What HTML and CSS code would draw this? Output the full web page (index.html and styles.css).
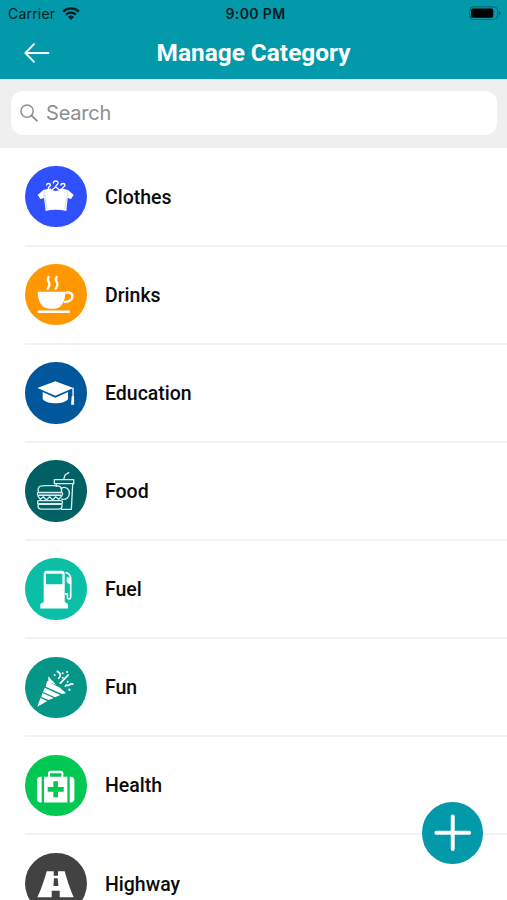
FILE: index.html
```
<!DOCTYPE html>
<html lang="en">
<head>
    <meta charset="utf-8">
    <title>Manage Category</title>
    <meta name="viewport" content="width=device-width, initial-scale=1">
    <link rel="stylesheet" href="styles.css">
</head>
<body>
    <header>
        <div class="statusBar">
            <div class="carrier">
                <span>Carrier</span>
                <svg class="wifi" viewBox="0 0 18 13">
                    <path d="M1.2 4.6a11.2 11.2 0 0 1 15.6 0M4 7.6a7.2 7.2 0 0 1 10 0" fill="none" stroke="#031c20" stroke-width="2.3"/>
                    <path d="M6 9.9a4.4 4.4 0 0 1 6 0L9 12.9z" fill="#031c20"/>
                </svg>
            </div>
            <div class="time">9:00 PM</div>
            <svg class="battery" viewBox="0 0 32 15">
                <rect x=".6" y=".9" width="28" height="12.6" rx="3.6" fill="none" stroke="#04606b"/>
                <rect x="2" y="2.5" width="22.3" height="9.3" rx="1.8" fill="#000"/>
                <path d="M30 5a2.5 2.5 0 0 1 0 4.6z" fill="#04606b"/>
            </svg>
        </div>
        <div class="navBar">
            <svg class="back" viewBox="0 0 26 20">
                <path d="M10 1.2L1.4 10l8.6 8.8M1.4 10h23.2" fill="none" stroke="#fff" stroke-width="1.8" stroke-linecap="round" stroke-linejoin="round"/>
            </svg>
            <h1>Manage Category</h1>
        </div>
    </header>

    <div class="searchArea">
        <div class="searchBox">
            <svg class="searchIcon" viewBox="0 0 18 18">
                <circle cx="7.1" cy="7.1" r="6.1" fill="none" stroke="#8e8e93" stroke-width="1.5"/>
                <path d="M11.6 11.6l5.2 5" stroke="#8e8e93" stroke-width="2" stroke-linecap="round"/>
            </svg>
            <span>Search</span>
        </div>
    </div>

    <main>
        <div class="row">
            <svg class="icon clothes" viewBox="28 29 184 184">
                <g fill="none" stroke="#fff" stroke-width="4" stroke-linecap="round">
                    <path d="M93 86c0-6 11-6 11 0 0 5-6 4-6 10M113 80c0-8 15-8 14 0-1 6-7 5-7 12l-12 9M120 92l12 9M136 86c0-6 12-6 12 0 0 5-7 5-7 10"/>
                </g>
                <path d="M66 116l17-15 21-5c7 11 25 11 32 0l21 5 17 15-8 12-10-3-4 39c-22-5-42-5-62 0l-5-39-11 3z" fill="#fff"/>
                <path d="M87 116l7 46M154 116l-7 46M86 105l-2 18M155 105l2 18" fill="none" stroke="#304ffe" stroke-opacity=".4" stroke-width="1.5"/>
            </svg>
            <span>Clothes</span>
        </div>
        <div class="row">
            <svg class="icon drinks" viewBox="28 29 184 184">
                <path d="M66 112h83c-1 24-8 51-33 51h-15c-25 0-35-27-35-51z" fill="#fff"/>
                <path d="M149 116c9-4 21 0 21 10 0 12-13 17-25 17" fill="none" stroke="#fff" stroke-width="7"/>
                <path d="M99 68c-9 12 5 14 2 25l-5 10M123 68c-9 12 5 14 2 25l-5 10" fill="none" stroke="#fff" stroke-width="7" stroke-linecap="round"/>
                <path d="M66 172h96" stroke="#fff" stroke-width="7"/>
            </svg>
            <span>Drinks</span>
        </div>
        <div class="row">
            <svg class="icon education" viewBox="28 29 184 184">
                <path d="M65 107l54-20 54 20-54 23z" fill="#fff"/>
                <path d="M81 119l38 17 38-17v21c-9 17-67 17-76 0z" fill="#fff"/>
                <path d="M172 106v28" stroke="#fff" stroke-width="4"/>
                <path d="M168 132h7v25h-9z" fill="#fff"/>
            </svg>
            <span>Education</span>
        </div>
        <div class="row">
            <svg class="icon food" viewBox="28 29 184 184">
                <g fill="none" stroke="#d8f0f0" stroke-width="4" stroke-linejoin="round" stroke-linecap="round">
                    <path d="M116 88h58v12h-58zM121 100l1 8M171 100l-4 77h-29M144 87l4-13 11-7"/>
                    <path d="M136 115c11-9 25-1 25 13 0 15-12 22-23 18"/>
                    <path d="M68 126c-5-25 15-20 35-20s39-4 34 20zM69 126h68c5 0 5 9 0 9H69c-5 0-5-9 0-9z"/>
                    <path d="M67 137l7 10 9-8 9 10 10-10 9 10 9-10 9 8 9-10M70 151h66c6 0 6 9 0 9H70c-6 0-6-9 0-9zM67 162h72v5c0 6-3 9-9 9H76c-6 0-9-3-9-9z"/>
                </g>
                <path d="M70 129h66v5H70z" fill="#a6cfcf" fill-opacity=".55"/>
            </svg>
            <span>Food</span>
        </div>
        <div class="row">
            <svg class="icon fuel" viewBox="28 29 184 184">
                <path d="M93 67h45c6 0 9 4 9 10v84l10 6v13H74v-13l10-6V77c0-6 3-10 9-10zm-2 9v32h49V76z" fill="#fff" fill-rule="evenodd"/>
                <path d="M149 73c9 0 16 8 16 18v54c0 9-10 8-10 0v-8h-7" fill="none" stroke="#fff" stroke-width="5"/>
                <path d="M153 85l12 5v21l-12-10z" fill="#fff"/>
            </svg>
            <span>Fuel</span>
        </div>
        <div class="row">
            <svg class="icon fun" viewBox="28 29 184 184">
                <path d="M98 87l23 25-23-8zM94 101l39 20 18 17-12 2-49-22zM87 121l47 22-16 7-36-16zM80 137l34 15-15 6-22-9zM74 152l21 9-30 17z" fill="#fff"/>
                <g fill="none" stroke="#fff" stroke-width="5.500" stroke-linecap="round" stroke-linejoin="round">
                    <path d="M125 72c10 6 12 12 4 21M157 83l-23 24M149 116c3-7 9 2 13-4 2-3 5-3 9-2"/>
                </g>
                <g fill="#fff">
                    <circle cx="117" cy="83" r="3"/>
                    <circle cx="141" cy="78" r="3"/>
                    <circle cx="154" cy="74" r="3"/>
                    <circle cx="141" cy="91" r="3"/>
                    <circle cx="156" cy="103" r="3"/>
                    <circle cx="161" cy="127" r="3.5"/>
                </g>
            </svg>
            <span>Fun</span>
        </div>
        <div class="row">
            <svg class="icon health" viewBox="28 29 184 184">
                <path d="M78 94h-3c-7 0-11 4-11 11v55c0 7 4 11 11 11h3zM162 94h3c7 0 11 4 11 11v55c0 7-4 11-11 11h-3z" fill="#fff"/>
                <path d="M85 94h12V83c0-4 3-7 7-7h32c4 0 7 3 7 7v11h12v77H85zm18 0h34V84h-34z" fill="#fff" fill-rule="evenodd"/>
                <path d="M113 108h14v17h17v14h-17v17h-14v-17H96v-14h17z" fill="#00c853"/>
            </svg>
            <span>Health</span>
        </div>
        <div class="row">
            <svg class="icon highway" viewBox="28 29 184 184">
                <path d="M93 84h21v13h13V84h20c5 19 17 56 27 78h-42v-20h-24v20H65c11-22 23-59 28-78zM115 105l-2 23h15l-2-23z" fill="#fff" fill-rule="evenodd"/>
            </svg>
            <span>Highway</span>
        </div>
    </main>

    <button class="addButton" aria-label="Add category">
        <svg viewBox="0 0 62 62">
            <path d="M31 14.5v33M14.500 31h33" stroke="#fff" stroke-width="4" stroke-linecap="round"/>
        </svg>
    </button>
</body>
</html>
```
FILE: styles.css
```
body {
    margin: 0;
    height: 900px;
    overflow: hidden;
    background: white;
    font-family: Roboto, sans-serif;
    color: #0b0b0b;
}
svg {
    display: block;
    flex: none;
}
header {
    height: 79px;
    background: #0299ab;
}
.statusBar {
    display: grid;
    grid-template-columns: 1fr auto 1fr;
    align-items: center;
    height: 27px;
    padding: 0 6px 0 8px;
    font-family: Inter, sans-serif;
    font-size: 14px;
    color: #031c20;
}
.carrier {
    display: flex;
    align-items: center;
    gap: 7px;
    letter-spacing: 0.2px;
}
.wifi {
    width: 18px;
    height: 13px;
}
.time {
    padding-left: 2px;
    font-weight: 600;
    letter-spacing: 0.4px;
}
.battery {
    width: 32px;
    height: 15px;
    justify-self: end;
}
.navBar {
    display: grid;
    grid-template-columns: 26px 1fr 26px;
    align-items: center;
    height: 51px;
    padding: 0 24px;
}
.back {
    width: 26px;
    height: 20px;
}
h1 {
    margin: 0;
    font-size: 24.4px;
    font-weight: 700;
    text-align: center;
    color: white;
}
.searchArea {
    box-sizing: border-box;
    height: 69px;
    padding: 12px 10px 13px 11px;
    background: #efefef;
}
.searchBox {
    display: flex;
    align-items: center;
    gap: 8px;
    height: 44px;
    padding-left: 9px;
    border-radius: 12px;
    background: white;
    font-family: Inter, sans-serif;
    font-size: 20px;
    letter-spacing: -0.2px;
    color: #8e8e93;
}
.searchIcon {
    width: 18px;
    height: 18px;
}
main {
    padding-top: 0.5px;
}
.row {
    display: flex;
    align-items: center;
    box-sizing: border-box;
    height: 98.15px;
    margin-left: 25.4px;
    border-bottom: 2px solid #f2f2f2;
    font-size: 19.5px;
    font-weight: 500;
}
.icon {
    width: 61.4px;
    height: 61.4px;
    margin-right: 18.2px;
    border-radius: 50%;
}
.row span {
    padding-top: 1px;
}
.clothes {
    background: #304ffe;
}
.drinks {
    background: #ff9800;
}
.education {
    background: #01579b;
}
.food {
    background: #006064;
}
.fuel {
    background: #0abfa5;
}
.fun {
    background: #059688;
}
.health {
    background: #00c853;
}
.highway {
    background: #424242;
}
.addButton {
    position: fixed;
    right: 24px;
    bottom: 36.5px;
    width: 61.5px;
    height: 61.5px;
    padding: 0;
    border: none;
    border-radius: 50%;
    background: #0299ab;
    cursor: pointer;
}
```
